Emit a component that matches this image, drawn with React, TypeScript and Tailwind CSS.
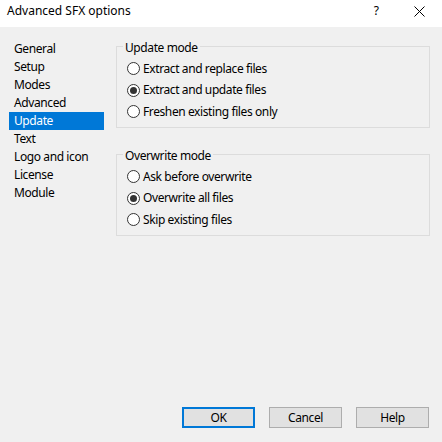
import React from 'react'

const FONT = { fontFamily: '"Segoe UI", "Noto Sans", sans-serif' }

const pages = ['General', 'Setup', 'Modes', 'Advanced', 'Update', 'Text', 'Logo and icon', 'License', 'Module']

function Radio({ label, checked }: { label: string; checked?: boolean }) {
  return (
    <div className="flex h-[21.5px] items-center">
      <span className="flex h-[13px] w-[13px] items-center justify-center rounded-full border border-[#333333] bg-white">
        {checked && <span className="h-[7px] w-[7px] rounded-full bg-[#333333]" />}
      </span>
      <span className="ml-[3px] leading-none">{label}</span>
    </div>
  )
}

function Group({ title, options, selected }: { title: string; options: string[]; selected: number }) {
  return (
    <div className="relative h-[82px] w-[314px] border border-[#dcdcdc] pl-[10px] pt-[11px]">
      <span className="absolute left-[6px] top-[-7px] bg-[#f0f0f0] px-[2px] leading-[16px]">{title}</span>
      {options.map((o, i) => (
        <Radio key={o} label={o} checked={i === selected} />
      ))}
    </div>
  )
}

export default function App() {
  return (
    <div
      className="flex h-[442px] w-[442px] flex-col bg-[#f0f0f0] text-[12px] tracking-[-0.4px] text-black"
      style={FONT}
    >
      {/* title bar */}
      <div className="flex h-[27px] items-center bg-white pb-[5px] pl-[7px] tracking-normal">
        <span>Advanced SFX options</span>
        <span className="ml-auto mr-[35px]">?</span>
        <svg width="11" height="11" viewBox="0 0 11 11" className="mr-[17px]">
          <path d="M0.5 0.5 L10.5 10.5 M10.5 0.5 L0.5 10.5" stroke="#000" strokeWidth="1" />
        </svg>
      </div>

      <div className="flex flex-1">
        {/* page list */}
        <div className="ml-[9px] w-[95px] pt-[13px]">
          {pages.map((p) => (
            <div
              key={p}
              className={
                'flex h-[18px] items-center pl-[5px] ' + (p === 'Update' ? 'bg-[#0078d7] text-white' : '')
              }
            >
              {p}
            </div>
          ))}
        </div>

        {/* options */}
        <div className="ml-[12px] flex flex-col gap-[26px] pt-[19px]">
          <Group
            title="Update mode"
            options={['Extract and replace files', 'Extract and update files', 'Freshen existing files only']}
            selected={1}
          />
          <Group
            title="Overwrite mode"
            options={['Ask before overwrite', 'Overwrite all files', 'Skip existing files']}
            selected={1}
          />
        </div>
      </div>

      {/* buttons */}
      <div className="mb-[14px] mr-[13px] flex justify-end gap-[14px]">
        <button className="h-[21px] w-[73px] border-2 border-[#0078d7] bg-[#e1e1e1]">OK</button>
        <button className="h-[21px] w-[73px] border border-[#adadad] bg-[#e1e1e1]">Cancel</button>
        <button className="h-[21px] w-[73px] border border-[#adadad] bg-[#e1e1e1]">Help</button>
      </div>
    </div>
  )
}
